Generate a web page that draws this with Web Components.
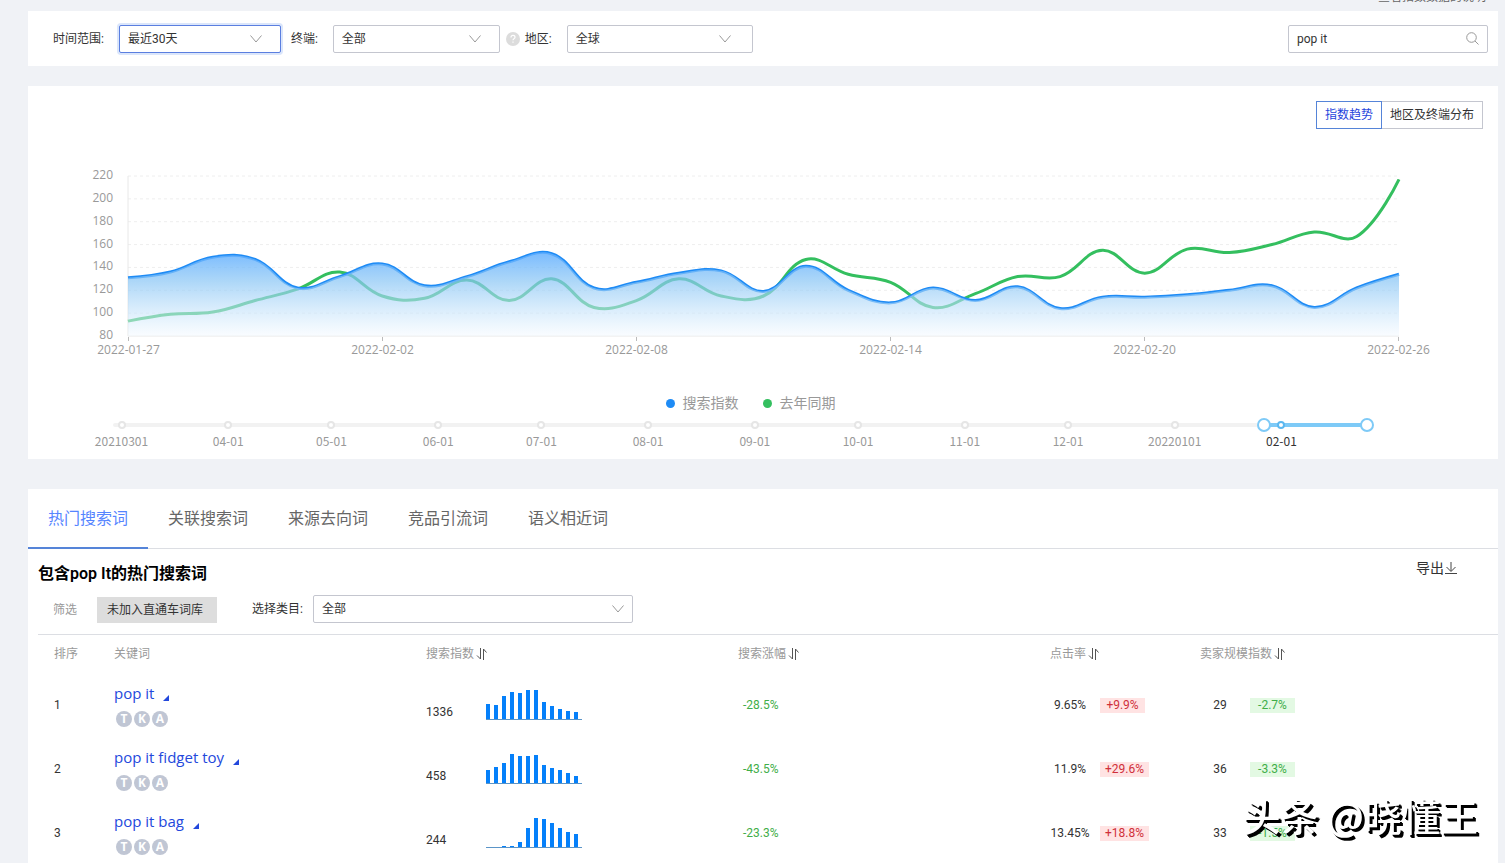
<!DOCTYPE html>
<html lang="zh-CN">
<head>
<meta charset="utf-8">
<meta name="viewport" content="width=device-width, initial-scale=1">
<title>关键词指数</title>
<style>
  html {
    scrollbar-width: none;
  }

  body {
    margin: 0;
    background: #f0f2f6;
    color: #333;
    font: 12px/18px Roboto, "Noto Sans CJK SC", sans-serif;
  }
</style>
</head>
<body>
<keyword-page>
  <filter-bar></filter-bar>
  <trend-card></trend-card>
  <words-card></words-card>
</keyword-page>

<script>
const CHEVRON = '<svg width="14" height="8" viewBox="0 0 14 8" fill="none" stroke="#999" aria-hidden="true"><path d="M1.500 .5 7 7 12.500.5"/></svg>';

class KeywordPage extends HTMLElement {
  constructor() {
    super();
    this.attachShadow({ mode: 'open' }).innerHTML = `
      <style>
        :host {
          display: block;
          position: relative;
          padding: 0 7px 0 28px;
        }

        .top {
          display: flex;
          justify-content: flex-end;
          align-items: flex-end;
          height: 3px;
          margin-bottom: 8px;
          padding-right: 12px;
          overflow: hidden;
          color: #666;
          line-height: 12px;
        }

        .mark {
          position: fixed;
          right: 27px;
          bottom: 24px;
          color: #fff;
          font: 500 38px/48px "Noto Sans CJK SC", sans-serif;
          text-shadow: 2px 2px 0 #000, 3px 3px 0 #000;
          pointer-events: none;
        }
      </style>
      <div class="top"><span>查看指数数据的说明</span></div>
      <slot></slot>
      <div class="mark">头条 @晓懂王</div>
    `;
  }
}

class FieldSelect extends HTMLElement {
  connectedCallback() {
    const label = this.getAttribute('label');
    const value = this.getAttribute('value');
    this.attachShadow({ mode: 'open' }).innerHTML = `
      <style>
        :host {
          display: flex;
          align-items: center;
          gap: var(--label-gap, 15px);
        }

        label {
          color: #333;
          white-space: nowrap;
        }

        .box {
          display: flex;
          position: relative;
          width: var(--select-width, 160px);
        }

        select {
          appearance: none;
          box-sizing: border-box;
          width: 100%;
          height: 28px;
          padding: 0 8px;
          border: 1px solid #c4c6cf;
          border-radius: 2px;
          background: #fff;
          color: #333;
          font: inherit;
          outline: none;
        }

        :host([active]) select {
          border-color: #5b7fe0;
          box-shadow: 0 0 0 2px #dbe6fb;
        }

        svg {
          position: absolute;
          top: 10px;
          right: var(--arrow-right, 18px);
          pointer-events: none;
        }
      </style>
      <label for="field">${label}</label>
      <div class="box">
        <select id="field"><option>${value}</option></select>
        ${CHEVRON}
      </div>
    `;
  }
}

class FilterBar extends HTMLElement {
  constructor() {
    super();
    this.attachShadow({ mode: 'open' }).innerHTML = `
      <style>
        :host {
          display: flex;
          align-items: center;
          box-sizing: border-box;
          height: 55px;
          margin-bottom: 20px;
          padding: 0 10px 0 25px;
          background: #fff;
        }

        .range { --select-width: 162px; margin-right: 10px; }
        .device { --select-width: 167px; margin-right: 6px; }
        .region { --select-width: 186px; --arrow-right: 21px; margin-left: 5px; }

        .search {
          display: flex;
          align-items: center;
          box-sizing: border-box;
          width: 200px;
          height: 28px;
          margin-left: auto;
          padding: 0 8px;
          border: 1px solid #c4c6cf;
          border-radius: 2px;
        }

        input {
          flex: 1;
          min-width: 0;
          padding: 0;
          border: 0;
          outline: 0;
          color: #333;
          font: inherit;
        }
      </style>
      <field-select class="range" active label="时间范围:" value="最近30天"></field-select>
      <field-select class="device" label="终端:" value="全部"></field-select>
      <svg width="14" height="14" viewBox="0 0 14 14" role="img" aria-label="帮助">
        <circle cx="7" cy="7" r="7" fill="#dcdcdc"/>
        <path d="M5 5.4C5 4.2 5.8 3.4 7 3.4s2 .8 2 1.8C9 6.600 7 6.700 7 8.300M7 9.600v1.200" fill="none" stroke="#fff" stroke-width="1.200"/>
      </svg>
      <field-select class="region" label="地区:" value="全球"></field-select>
      <div class="search">
        <input type="text" value="pop it" aria-label="搜索">
        <svg width="13" height="13" viewBox="0 0 13 13" fill="none" stroke="#999" aria-hidden="true">
          <circle cx="5.500" cy="5.500" r="4.800"/><path d="m9 9 3.500 3.500"/>
        </svg>
      </div>
    `;
  }
}

class TrendChart extends HTMLElement {
  constructor() {
    super();
    this.current = [131, 136, 149, 147, 122, 132, 143, 124, 132, 145, 152, 122, 127, 135, 137, 119, 141, 120, 109, 122, 111, 123, 104, 114, 114, 116, 120, 124, 105, 122, 134];
    this.previous = [93, 99, 101, 111, 121, 136, 115, 113, 129, 111, 130, 105, 111, 130, 115, 115, 147, 134, 127, 105, 117, 132, 132, 155, 135, 156, 153, 160, 171, 167, 217];
  }

  connectedCallback() {
    this.attachShadow({ mode: 'open' }).innerHTML = this.template;
  }

  // Smooth line: control points follow the chord between both neighbours.
  curve(values) {
    const smooth = 0.4;
    const pts = values.map((v, i) => [i * 1270 / 30, (220 - v) * 160 / 140]);
    const dist = (a, b) => Math.hypot(a[0] - b[0], a[1] - b[1]);
    let out = pts[0];
    let d = `M${pts[0]}`;
    for (let i = 1; i < pts.length; i++) {
      const p = pts[i];
      const next = pts[i + 1];
      let into = p;
      let after = p;
      if (next) {
        const prev = pts[i - 1];
        const ratio = dist(p, next) / (dist(p, next) + dist(p, prev));
        const vx = (next[0] - prev[0]) * smooth;
        const vy = (next[1] - prev[1]) * smooth;
        into = [p[0] - vx * (1 - ratio), p[1] - vy * (1 - ratio)];
        after = [p[0] + vx * ratio, p[1] + vy * ratio];
      }
      d += `C${out} ${into} ${p}`;
      out = after;
    }
    return d;
  }

  get template() {
    const scale = [220, 200, 180, 160, 140, 120, 100, 80];
    const dates = ['2022-01-27', '2022-02-02', '2022-02-08', '2022-02-14', '2022-02-20', '2022-02-26'];
    const grid = scale.slice(0, -1).map((v, i) => `<path class="grid" d="M0 ${i * 160 / 7}H1270"/>`).join('');
    const line = this.curve(this.current);
    return `
      <style>
        :host {
          display: grid;
          grid-template-columns: 35px 1fr;
          column-gap: 15px;
          padding: 0 99px 0 50px;
          color: #999;
          font: 12px/18px "Open Sans", "Noto Sans CJK SC", sans-serif;
        }

        .scale {
          display: flex;
          flex-direction: column;
          justify-content: space-between;
          height: 178px;
          margin-top: -10px;
          text-align: right;
        }

        .plot {
          display: block;
          width: 100%;
          height: 160px;
          overflow: visible;
        }

        path {
          fill: none;
          vector-effect: non-scaling-stroke;
        }

        .grid { stroke: #eee; stroke-dasharray: 3 3; }
        .axis { stroke: #e8e8e8; }
        .now { stroke: #1e8bf5; stroke-width: 3; }
        .past { stroke: #34bf5f; stroke-width: 3; }
        .area { fill: url(#fade); }

        .dates {
          grid-column: 2;
          display: flex;
          justify-content: space-between;
          margin-top: -7px;
        }

        .dates span {
          display: flex;
          flex-direction: column;
          align-items: center;
          width: 1px;
          white-space: nowrap;
        }

        .dates span::before {
          content: "";
          width: 1px;
          height: 4px;
          background: #bbb;
        }

        .legend {
          grid-column: 1 / -1;
          display: flex;
          justify-content: center;
          gap: 24px;
          margin: 34px 0 0 24px;
          font-size: 14px;
          line-height: 20px;
        }

        .legend span {
          display: flex;
          align-items: center;
          gap: 8px;
        }

        .legend span::before {
          content: "";
          width: 9px;
          height: 9px;
          border-radius: 50%;
          background: #1e8bf5;
        }

        .legend .last::before { background: #34bf5f; }
      </style>
      <div class="scale">${scale.map(v => `<div>${v}</div>`).join('')}</div>
      <svg class="plot" viewBox="0 0 1270 160" preserveAspectRatio="none" role="img" aria-label="指数趋势">
        <defs>
          <linearGradient id="fade" x1="0" y1="76" x2="0" y2="160" gradientUnits="userSpaceOnUse">
            <stop offset="0" stop-color="#60aeff" stop-opacity=".85"/>
            <stop offset=".35" stop-color="#8ac6f5" stop-opacity=".7"/>
            <stop offset="1" stop-color="#f4faff" stop-opacity=".5"/>
          </linearGradient>
        </defs>
        ${grid}
        <path class="axis" d="M0 0V160H1270"/>
        <path class="past" d="${this.curve(this.previous)}"/>
        <path class="now" d="${line}"/>
        <path class="area" d="${line}V160H0Z"/>
      </svg>
      <div class="dates">${dates.map(d => `<span>${d}</span>`).join('')}</div>
      <div class="legend"><span>搜索指数</span><span class="last">去年同期</span></div>
    `;
  }
}

class DateSlider extends HTMLElement {
  constructor() {
    super();
    const months = ['20210301', '04-01', '05-01', '06-01', '07-01', '08-01', '09-01', '10-01', '11-01', '12-01', '20220101', '02-01'];
    this.attachShadow({ mode: 'open' }).innerHTML = `
      <style>
        :host {
          display: block;
          position: relative;
          margin: 4px 131px 0 93px;
          color: #999;
          font: 12px/18px "Noto Sans CJK SC", sans-serif;
        }

        /* one column per month, as wide as it has days */
        .months {
          display: grid;
          grid-template-columns: 31fr 30fr 31fr 30fr 31fr 31fr 30fr 31fr 30fr 31fr 31fr 25fr;
        }

        .rail, .span {
          position: absolute;
          top: 6px;
          right: 0;
          height: 4px;
          background: #f2f2f2;
        }

        .rail { left: -8px; border-radius: 2px; }
        .span { left: calc(100% * 332 / 362); background: #7ecaf7; }

        .months div {
          position: relative;
          display: flex;
          flex-direction: column;
          align-items: center;
          gap: 3px;
          width: 1px;
          white-space: nowrap;
        }

        .months div::before {
          content: "";
          box-sizing: border-box;
          width: 8px;
          height: 8px;
          margin-top: 4px;
          border: 2px solid #e6e6e6;
          border-radius: 50%;
          background: #fff;
        }

        .months .on { color: #333; }
        .months .on::before { border-color: #5cb8f0; }

        input {
          appearance: none;
          position: absolute;
          top: 1px;
          left: -7px;
          width: calc(100% + 14px);
          height: 14px;
          margin: 0;
          background: none;
          pointer-events: none;
        }

        input::-webkit-slider-thumb {
          appearance: none;
          box-sizing: border-box;
          width: 14px;
          height: 14px;
          border: 2px solid #7ecaf7;
          border-radius: 50%;
          background: #fff;
          pointer-events: auto;
        }
      </style>
      <div class="rail"></div>
      <div class="span"></div>
      <div class="months">
        ${months.map((m, i) => `<div class="${i === 11 ? 'on' : ''}">${m}</div>`).join('')}
      </div>
      <input type="range" min="0" max="362" value="332" aria-label="开始日期">
      <input type="range" min="0" max="362" value="362" aria-label="结束日期">
    `;
  }
}

class TrendCard extends HTMLElement {
  constructor() {
    super();
    this.attachShadow({ mode: 'open' }).innerHTML = `
      <style>
        :host {
          display: block;
          margin-bottom: 30px;
          padding: 15px 0 9px;
          background: #fff;
        }

        .modes {
          display: flex;
          justify-content: flex-end;
          margin: 0 15px 47px 0;
        }

        button {
          height: 28px;
          padding: 0 8px;
          border: 1px solid #c4c6cf;
          border-left-width: 0;
          background: #fff;
          color: #333;
          font: inherit;
        }

        .on {
          border: 1px solid #5584d8;
          color: #1f45dc;
        }
      </style>
      <div class="modes">
        <button class="on">指数趋势</button>
        <button>地区及终端分布</button>
      </div>
      <trend-chart></trend-chart>
      <date-slider></date-slider>
    `;
  }
}

class MiniBars extends HTMLElement {
  connectedCallback() {
    const bars = this.getAttribute('values').split(',')
      .map((h, i) => `<rect x="${i * 8}" y="${31 - h}" width="4" height="${h}"/>`).join('');
    this.attachShadow({ mode: 'open' }).innerHTML = `
      <style>
        :host { display: block; }
        svg { display: block; fill: #0580fa; }
        path { stroke: #5b95c8; }
      </style>
      <svg width="96" height="32" viewBox="0 0 96 32" aria-hidden="true">
        ${bars}<path d="M0 30.500H96"/>
      </svg>
    `;
  }
}

class RateTag extends HTMLElement {
  constructor() {
    super();
    this.attachShadow({ mode: 'open' }).innerHTML = `
      <style>
        :host {
          display: inline-block;
          box-sizing: border-box;
          min-width: 45px;
          padding: 0 5px;
          color: #3fae49;
          line-height: 15px;
          text-align: center;
        }

        :host([fill]) { background: #e3f9e3; }

        :host([up]) {
          background: #ffe3e3;
          color: #d0303a;
        }
      </style>
      <slot></slot>
    `;
  }
}

class WordsTable extends HTMLElement {
  constructor() {
    super();
    this.rows = [
      { word: 'pop it', index: 1336, bars: '16,15,24,28,27,30,30,18,14,11,9,8', growth: '-28.5%', ctr: '9.65%', ctrRate: '+9.9%', sellers: 29, sellerRate: '-2.7%' },
      { word: 'pop it fidget toy', index: 458, bars: '14,17,21,30,28,28,29,19,16,14,11,8', growth: '-43.5%', ctr: '11.9%', ctrRate: '+29.6%', sellers: 36, sellerRate: '-3.3%' },
      { word: 'pop it bag', index: 244, bars: '0,1,2,2,6,20,30,29,25,20,16,14', growth: '-23.3%', ctr: '13.45%', ctrRate: '+18.8%', sellers: 33, sellerRate: '-1.5%' }
    ];
  }

  connectedCallback() {
    this.attachShadow({ mode: 'open' }).innerHTML = this.template;
  }

  sortable(text) {
    return `<button>${text}<svg width="11" height="12" viewBox="0 0 11 12" fill="none" stroke="#555" aria-hidden="true"><path d="M4.500 0v11L1 7.500M7.500 12V1L10.500 4.500"/></svg></button>`;
  }

  row(r, i) {
    return `
      <tr>
        <td>${i + 1}</td>
        <td>
          <div class="word"><a href="#">${r.word}</a><svg width="6" height="6" aria-hidden="true"><path d="M6 0v6H0z" fill="#2348dc"/></svg></div>
          <div class="marks"><span>T</span><span>K</span><span>A</span></div>
        </td>
        <td><div class="index"><span>${r.index}</span><mini-bars values="${r.bars}"></mini-bars></div></td>
        <td><rate-tag>${r.growth}</rate-tag></td>
        <td><div class="pair"><span>${r.ctr}</span><rate-tag up>${r.ctrRate}</rate-tag></div></td>
        <td><div class="pair"><span>${r.sellers}</span><rate-tag fill>${r.sellerRate}</rate-tag></div></td>
      </tr>
    `;
  }

  get template() {
    return `
      <style>
        :host { display: block; }

        table {
          width: 100%;
          border-top: 1px solid #dcdee3;
          border-spacing: 0;
          table-layout: fixed;
        }

        th, td {
          padding: 0 0 0 16px;
          text-align: left;
        }

        th {
          height: 38px;
          color: #999;
          font-weight: 400;
        }

        td { height: 64px; }
        .rank { width: 44px; }
        .ctr { width: 134px; }
        .sellers { width: 298px; }

        button {
          display: flex;
          align-items: center;
          gap: 2px;
          padding: 0;
          border: 0;
          background: none;
          color: inherit;
          font: inherit;
        }

        .word {
          display: flex;
          align-items: baseline;
          gap: 9px;
          font: 15px/20px "Open Sans", sans-serif;
        }

        .word svg { overflow: visible; }
        .word path { transform: translateY(2px); }

        a {
          color: #2348dc;
          text-decoration: none;
        }

        .marks {
          display: flex;
          gap: 2px;
          margin: 8px 0 0 2px;
        }

        .marks span {
          width: 16px;
          border-radius: 50%;
          background: #c0c6d4;
          color: #fff;
          font: bold 12px/16px "Open Sans", sans-serif;
          text-align: center;
        }

        .index {
          display: flex;
          align-items: flex-end;
        }

        .index span { width: 60px; }

        .pair {
          display: flex;
          align-items: center;
          gap: 10px;
        }

        .pair span {
          width: 40px;
          text-align: center;
        }
      </style>
      <table>
        <thead>
          <tr>
            <th class="rank">排序</th>
            <th>关键词</th>
            <th>${this.sortable('搜索指数')}</th>
            <th>${this.sortable('搜索涨幅')}</th>
            <th class="ctr">${this.sortable('点击率')}</th>
            <th class="sellers">${this.sortable('卖家规模指数')}</th>
          </tr>
        </thead>
        <tbody>${this.rows.map((r, i) => this.row(r, i)).join('')}</tbody>
      </table>
    `;
  }
}

class WordsCard extends HTMLElement {
  constructor() {
    super();
    this.attachShadow({ mode: 'open' }).innerHTML = `
      <style>
        :host {
          display: block;
          background: #fff;
        }

        nav {
          display: flex;
          height: 59px;
          border-bottom: 1px solid #dcdee3;
        }

        nav a {
          height: 58px;
          padding: 0 20px;
          border-bottom: 2px solid transparent;
          color: #666;
          font-size: 16px;
          line-height: 60px;
          text-decoration: none;
        }

        nav .on {
          border-color: #5584d8;
          color: #5584ff;
        }

        .head {
          display: flex;
          justify-content: space-between;
          align-items: center;
          padding: 12px 40px 8px 10px;
        }

        h2 {
          margin: 0;
          color: #000;
          font-size: 16px;
          font-weight: 600;
          line-height: 24px;
        }

        button {
          padding: 0;
          border: 0;
          font: inherit;
          color: #333;
        }

        .export {
          display: flex;
          align-items: center;
          margin-bottom: 12px;
          background: none;
          font-size: 14px;
          line-height: 14px;
        }

        .filters {
          display: flex;
          align-items: flex-end;
          padding: 0 0 11px 25px;
          color: #999;
          line-height: 26px;
        }

        .add {
          height: 26px;
          margin: 0 35px 0 20px;
          padding: 0 14px 0 10px;
          background: #ddd;
        }

        field-select {
          --select-width: 320px;
          --label-gap: 10px;
          --arrow-right: 8px;
        }

        words-table { margin-left: 10px; }
      </style>
      <nav>
        <a class="on" href="#">热门搜索词</a>
        <a href="#">关联搜索词</a>
        <a href="#">来源去向词</a>
        <a href="#">竞品引流词</a>
        <a href="#">语义相近词</a>
      </nav>
      <div class="head">
        <h2>包含pop It的热门搜索词</h2>
        <button class="export">导出<svg width="14" height="14" viewBox="0 0 14 14" fill="none" stroke="#444" aria-hidden="true"><path d="M7 1v9M2.500 6 7 10.500 11.500 6M1 12.500h12"/></svg></button>
      </div>
      <div class="filters">
        <span>筛选</span>
        <button class="add">未加入直通车词库</button>
        <field-select label="选择类目:" value="全部"></field-select>
      </div>
      <words-table></words-table>
    `;
  }
}

customElements.define('field-select', FieldSelect);
customElements.define('filter-bar', FilterBar);
customElements.define('trend-chart', TrendChart);
customElements.define('date-slider', DateSlider);
customElements.define('trend-card', TrendCard);
customElements.define('mini-bars', MiniBars);
customElements.define('rate-tag', RateTag);
customElements.define('words-table', WordsTable);
customElements.define('words-card', WordsCard);
customElements.define('keyword-page', KeywordPage);
</script>
</body>
</html>
